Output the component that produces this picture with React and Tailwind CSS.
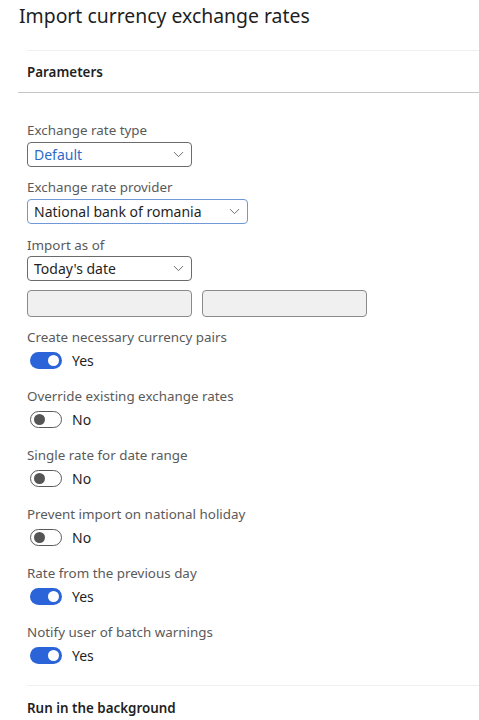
import { ChevronDown } from 'lucide-react'

const FONT = { fontFamily: '"Noto Sans", "Open Sans", sans-serif' }

function Select({ value, width, active, blue }) {
  return (
    <div
      className={`flex h-[25px] items-center justify-between rounded-[4px] border bg-white pl-[6px] pr-[4px] ${active ? 'border-[#6e98d8]' : 'border-[#6b6b6b]'}`}
      style={{ width }}
    >
      <span className={`text-[14px] leading-none ${blue ? 'text-[#2d6bc8]' : 'text-[#1f1f1f]'}`}>{value}</span>
      <ChevronDown size={17} strokeWidth={1.2} className="text-[#555]" />
    </div>
  )
}

function Toggle({ on }) {
  return (
    <div className="flex items-center gap-[10px]">
      {on ? (
        <div className="flex h-[17px] w-[32px] items-center justify-end rounded-full bg-[#2b63d9] pr-[3px]">
          <div className="h-[11px] w-[11px] rounded-full bg-white" />
        </div>
      ) : (
        <div className="flex h-[17px] w-[32px] items-center rounded-full border border-[#5a5a5a] bg-white pl-[3px]">
          <div className="h-[11px] w-[11px] rounded-full bg-[#555]" />
        </div>
      )}
      <span className="text-[14px] leading-none text-[#1f1f1f]">{on ? 'Yes' : 'No'}</span>
    </div>
  )
}

const TOGGLES = [
  { label: 'Create necessary currency pairs', on: true },
  { label: 'Override existing exchange rates', on: false },
  { label: 'Single rate for date range', on: false },
  { label: 'Prevent import on national holiday', on: false },
  { label: 'Rate from the previous day', on: true },
  { label: 'Notify user of batch warnings', on: true },
]

export default function App() {
  return (
    <div className="h-[720px] w-[479px] overflow-hidden bg-white" style={FONT}>
      <h1 className="pl-[19px] pt-[3px] text-[19.4px] leading-[26px] text-[#1f1f1f]">Import currency exchange rates</h1>

      <div className="ml-[27px] mt-[21px] border-t border-[#f0f0f0]" />
      <div className="ml-[18px] border-b border-[#c6c6c6] pb-[11px] pl-[9px] pt-[12px]">
        <h2 className="text-[13.4px] font-semibold leading-[18px] text-[#1f1f1f]">Parameters</h2>
      </div>

      <div className="pl-[27px] pt-[29px]">
        <label className="block text-[13.4px] leading-[16px] text-[#5a5a5a]">Exchange rate type</label>
        <div className="mt-[4px]">
          <Select value="Default" width={165} blue />
        </div>

        <label className="mt-[12px] block text-[13.4px] leading-[16px] text-[#5a5a5a]">Exchange rate provider</label>
        <div className="mt-[4px]">
          <Select value="National bank of romania" width={221} active />
        </div>

        <label className="mt-[13px] block text-[13.4px] leading-[16px] text-[#5a5a5a]">Import as of</label>
        <div className="mt-[3px]">
          <Select value="Today's date" width={165} />
        </div>
        <div className="mt-[9px] flex gap-[10px]">
          <div className="h-[27px] w-[165px] rounded-[4px] border border-[#8a8a8a] bg-[#f0f0f0]" />
          <div className="h-[27px] w-[165px] rounded-[4px] border border-[#8a8a8a] bg-[#f0f0f0]" />
        </div>

        <div className="mt-[12px] flex flex-col gap-[19px]">
          {TOGGLES.map((item) => (
            <div key={item.label}>
              <div className="text-[13.4px] leading-[16px] text-[#5a5a5a]">{item.label}</div>
              <div className="mt-[7px] pl-[3px]">
                <Toggle on={item.on} />
              </div>
            </div>
          ))}
        </div>

        <div className="mt-[21px] border-t border-[#f0f0f0]" />
        <h2 className="pt-[13px] text-[13.4px] font-semibold leading-[18px] text-[#1f1f1f]">Run in the background</h2>
      </div>
    </div>
  )
}
